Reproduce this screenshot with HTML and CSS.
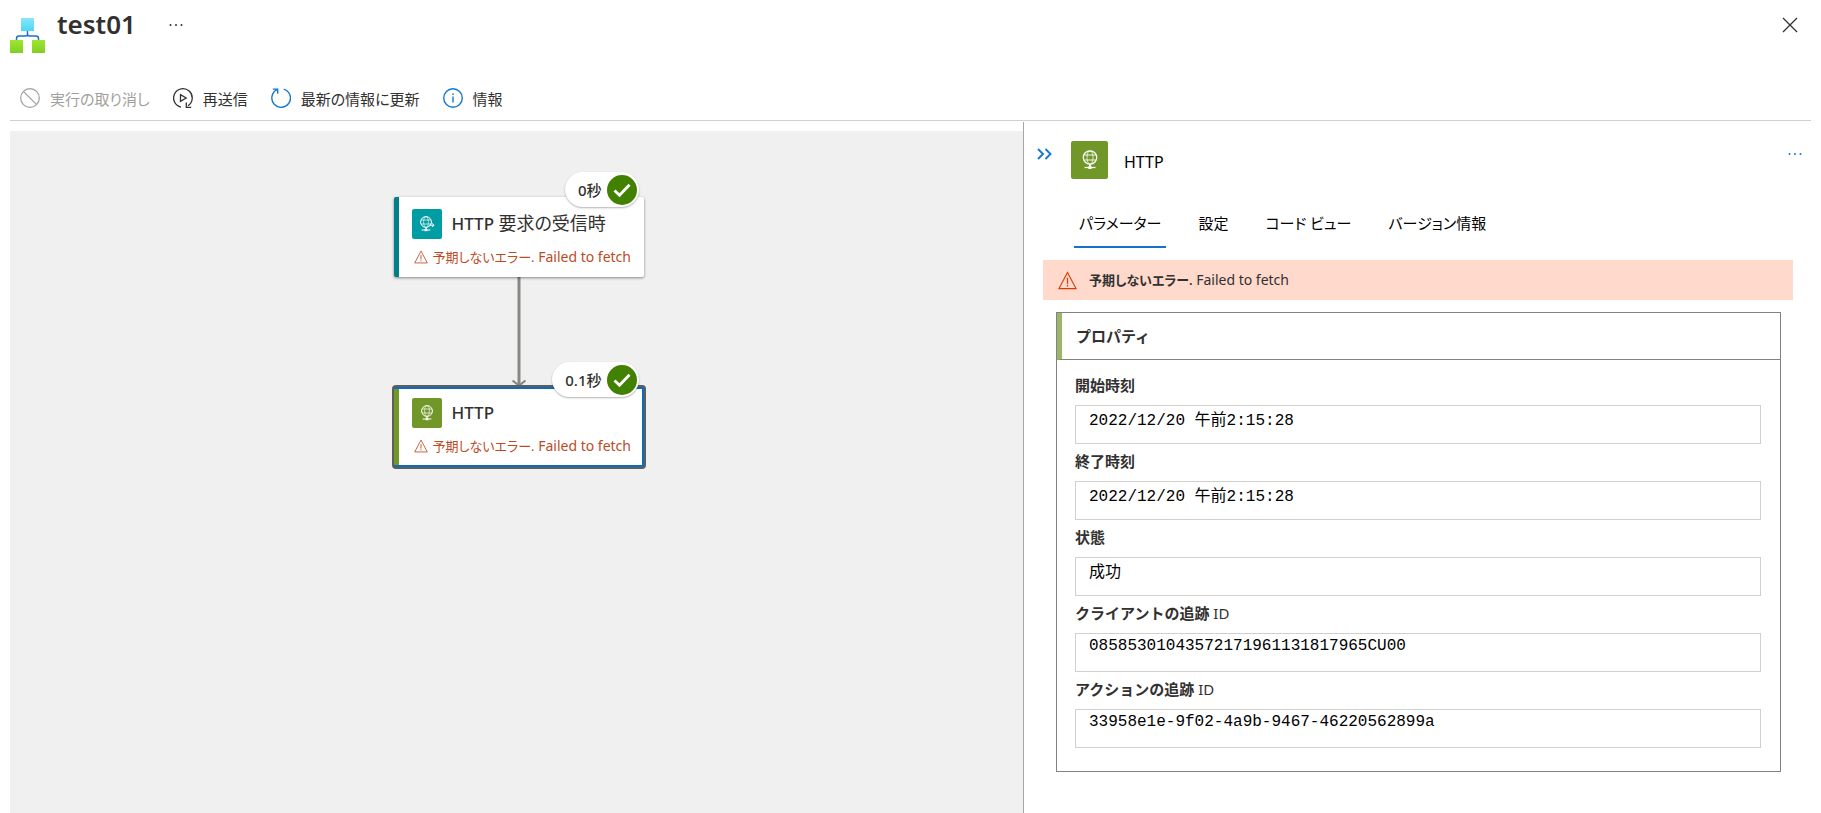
FILE: index.html
```html
<!DOCTYPE html>
<html lang="ja">
<head>
<meta charset="utf-8">
<meta name="viewport" content="width=device-width, initial-scale=1">
<title>test01</title>
<link rel="stylesheet" href="styles.css">
</head>
<body>
<svg class="defs" aria-hidden="true">
  <symbol id="globe" viewBox="0 0 14 16">
    <g fill="none" stroke="currentColor">
      <circle cx="7" cy="6" r="5.4" stroke-width="1"/>
      <ellipse cx="7" cy="6" rx="2.4" ry="5.4" stroke-width=".6"/>
      <path d="M2.2 4h9.600M2.200 8h9.600" stroke-width=".7"/>
      <path d="M7 11.500v2" stroke-width="1.400"/>
      <path d="M2.600 14h8.800" stroke-width="1"/>
      <path d="M5.600 14.200h2.800" stroke-width="2"/>
    </g>
  </symbol>
  <symbol id="warning" viewBox="0 0 20 20">
    <path d="M10 1.5 19 18.500H1Z" fill="none" stroke="currentColor" stroke-width="1.2"/>
    <path d="M10 7.200v6.300M10 14.600v1.600" stroke="currentColor" stroke-width="1.3"/>
  </symbol>
  <symbol id="done" viewBox="0 0 30 30">
    <circle cx="15" cy="15" r="15" fill="#428000"/>
    <path d="M7.500 15.500 12.500 20.300 22.500 9.800" fill="none" stroke="#fff" stroke-width="2.800"/>
  </symbol>
  <symbol id="more" viewBox="0 0 14 4">
    <g fill="currentColor"><circle cx="1.500" cy="2" r="1"/><circle cx="7" cy="2" r="1"/><circle cx="12.500" cy="2" r="1"/></g>
  </symbol>
</svg>

<header class="header">
  <svg class="app-logo" viewBox="0 0 35 35" aria-hidden="true">
    <defs>
      <linearGradient id="sky" x2="0" y2="1"><stop stop-color="#86e7fb"/><stop offset="1" stop-color="#50d5f5"/></linearGradient>
      <linearGradient id="lime" x2="0" y2="1"><stop stop-color="#a0e52f"/><stop offset="1" stop-color="#80cf25"/></linearGradient>
    </defs>
    <path d="M17.500 13v3q0 2-2 2H9q-2.500 0-2.500 2.500V23M17.500 13v3q0 2 2 2H26q2.500 0 2.500 2.500V23" fill="none" stroke="#1b72c9" stroke-width="1.500"/>
    <path d="M11 0h13v13H11z" fill="url(#sky)"/>
    <path d="M0 22h13v13H0zM22 22h13v13H22z" fill="url(#lime)"/>
  </svg>
  <h1 class="title">test01</h1>
  <button class="icon-button" type="button" aria-label="その他"><svg class="more" aria-hidden="true"><use href="#more"/></svg></button>
  <button class="icon-button close" type="button" aria-label="閉じる"><svg class="close-icon" viewBox="0 0 16 16" aria-hidden="true"><path d="M1 1 15 15M15 1 1 15" stroke="currentColor" stroke-width="1.300"/></svg></button>
</header>

<nav class="toolbar">
  <button class="command" type="button" disabled>
    <svg class="command-icon" viewBox="0 0 20 20" aria-hidden="true"><g fill="none" stroke="#a19f9d" stroke-width="1.200"><circle cx="10" cy="10" r="9.300"/><path d="M3.400 3.400 16.600 16.600"/></g></svg>
    実行の取り消し
  </button>
  <button class="command" type="button">
    <svg class="command-icon" viewBox="0 0 20 20" aria-hidden="true"><g fill="none" stroke="#323130" stroke-width="1.300"><path d="M8 19.100A9.300 9.300 0 1 1 15 17.800M13.300 14.500v4.800h4.900"/><path d="M7.500 6.600v6.800l5.700-3.400z"/></g></svg>
    再送信
  </button>
  <button class="command" type="button">
    <svg class="command-icon" viewBox="0 0 20 20" aria-hidden="true"><g fill="none" stroke="#1478d2" stroke-width="1.400"><path d="M12.700 1.100A9.300 9.300 0 1 1 6 1.700M1.800 1.100h4.900v4.700"/></g></svg>
    最新の情報に更新
  </button>
  <button class="command" type="button">
    <svg class="command-icon" viewBox="0 0 20 20" aria-hidden="true"><circle cx="10" cy="10" r="9.300" fill="none" stroke="#1478d2" stroke-width="1.400"/><path d="M10 8.500v6M10 5.300v1.600" stroke="#1478d2" stroke-width="1.400"/></svg>
    情報
  </button>
</nav>

<main class="workspace">
  <section class="canvas">
    <article class="node node-trigger">
      <div class="badge">0秒<svg class="badge-icon" aria-hidden="true"><use href="#done"/></svg></div>
      <div class="node-head">
        <span class="tile tile-teal"><svg class="tile-glyph" viewBox="0 0 16 16" aria-hidden="true"><use href="#globe" width="14" height="16"/><path d="M10.500 9.200h4.500M13 7.200l2 2-2 2" fill="none" stroke="currentColor" stroke-width="1"/></svg></span>
        <h2 class="node-title">HTTP <span class="light">要求の受信時</span></h2>
      </div>
      <p class="node-error"><svg class="node-warning" aria-hidden="true"><use href="#warning"/></svg><span><span class="compact">予期しないエラー.</span> Failed to fetch</span></p>
    </article>
    <svg class="connector" viewBox="0 0 16 110" aria-hidden="true"><g fill="none" stroke="#8a8886"><path d="M8 0v109" stroke-width="3"/><path d="M1.500 103.500 8 108.500 14.500 103.500" stroke-width="2.200"/></g></svg>
    <article class="node node-selected">
      <div class="badge">0.1秒<svg class="badge-icon" aria-hidden="true"><use href="#done"/></svg></div>
      <div class="node-head">
        <span class="tile tile-green"><svg class="tile-glyph" viewBox="0 0 16 16" aria-hidden="true"><use href="#globe" x="1" width="14" height="16"/></svg></span>
        <h2 class="node-title">HTTP</h2>
      </div>
      <p class="node-error"><svg class="node-warning" aria-hidden="true"><use href="#warning"/></svg><span><span class="compact">予期しないエラー.</span> Failed to fetch</span></p>
    </article>
  </section>

  <aside class="panel">
    <div class="panel-head">
      <button class="icon-button collapse" type="button" aria-label="折りたたむ"><svg class="chevrons" viewBox="0 0 15 12" aria-hidden="true"><path d="M1 1l5 5-5 5M8.500 1l5 5-5 5" fill="none" stroke="currentColor" stroke-width="1.900"/></svg></button>
      <span class="tile tile-green tile-large"><svg class="tile-glyph-large" aria-hidden="true"><use href="#globe"/></svg></span>
      <h2 class="panel-title">HTTP</h2>
      <button class="icon-button panel-more" type="button" aria-label="その他"><svg class="more" aria-hidden="true"><use href="#more"/></svg></button>
    </div>
    <div class="tabs" role="tablist">
      <button class="tab" type="button" role="tab" aria-selected="true">パラメーター</button>
      <button class="tab" type="button" role="tab" aria-selected="false">設定</button>
      <button class="tab" type="button" role="tab" aria-selected="false">コード ビュー</button>
      <button class="tab" type="button" role="tab" aria-selected="false">バージョン情報</button>
    </div>
    <div class="alert" role="alert"><svg class="alert-icon" aria-hidden="true"><use href="#warning"/></svg><p class="alert-text"><strong class="compact">予期しないエラー.</strong> Failed to fetch</p></div>
    <section class="card">
      <h3 class="card-title">プロパティ</h3>
      <div class="fields">
        <label class="label" for="start">開始時刻</label>
        <input class="value" id="start" readonly value="2022/12/20 午前2:15:28">
        <label class="label" for="end">終了時刻</label>
        <input class="value" id="end" readonly value="2022/12/20 午前2:15:28">
        <label class="label" for="status">状態</label>
        <input class="value" id="status" readonly value="成功">
        <label class="label" for="client">クライアントの追跡 <span class="latin">ID</span></label>
        <input class="value" id="client" readonly value="08585301043572171961131817965CU00">
        <label class="label" for="action">アクションの追跡 <span class="latin">ID</span></label>
        <input class="value" id="action" readonly value="33958e1e-9f02-4a9b-9467-46220562899a">
      </div>
    </section>
  </aside>
</main>
</body>
</html>
```
FILE: styles.css
```css
* { box-sizing: border-box; }

body {
  margin: 0;
  min-height: 100vh;
  display: flex;
  flex-direction: column;
  background: #fff;
  color: #323130;
  font-family: "Noto Sans", "Noto Sans CJK JP", sans-serif;
  font-size: 15px;
  font-feature-settings: "palt";
}

h1, h2, h3, p { margin: 0; }
button { font: inherit; font-feature-settings: inherit; color: inherit; background: none; border: 0; padding: 0; cursor: pointer; }
svg { display: block; flex: none; }
.defs { position: absolute; width: 0; height: 0; }

.header { display: flex; align-items: flex-start; padding: 6px 23px 0 10px; height: 78px; }
.app-logo { width: 35px; height: 35px; margin: 12px 12px 0 0; }
.title { font-size: 26px; line-height: 36px; font-weight: 600; }
.icon-button { display: flex; align-items: center; height: 38px; }
.header .icon-button { margin-left: 33px; }
.more { width: 14px; height: 4px; }
.header .close { margin-left: auto; }
.close-icon { width: 16px; height: 16px; }

.toolbar { display: flex; gap: 23px; margin: 0 10px; padding: 0 10px; height: 43px; border-bottom: 1px solid #d2d0ce; }
.command { display: flex; align-items: center; gap: 10px; height: 40px; white-space: nowrap; }
.command:disabled { color: #a19f9d; }
.command-icon { width: 20px; height: 20px; }
.compact { font-size: 13px; }

.workspace { flex: 1; display: grid; grid-template-columns: 1013fr 798fr; padding: 1px 0 0 10px; }

.canvas { display: flex; flex-direction: column; align-items: center; margin-top: 9px; padding: 66px 0 0 4px; background: #f0f0f0; }
.node { position: relative; width: 250px; height: 80px; padding: 11px 0 0 13px; background: #fff; border-left: 5px solid #007f88; border-radius: 2px; box-shadow: 0 1px 3px rgba(0, 0, 0, .45); }
.node-selected { border-color: #709727; box-shadow: 0 0 0 2px #605e5c; }
.node-selected::after { content: ""; position: absolute; inset: 0 0 0 -5px; border: solid #0f6cbd; border-width: 2px 2px 2px 0; pointer-events: none; }
.node-head { display: flex; align-items: center; gap: 10px; }
.tile { display: flex; align-items: center; justify-content: center; width: 30px; height: 30px; border-radius: 2px; color: #fff; }
.tile-teal { background: #009da5; }
.tile-green { background: #709727; }
.tile-glyph { width: 16px; height: 16px; }
.node-title { font-size: 17px; line-height: 30px; font-weight: 500; white-space: nowrap; }
.light { font-size: 18px; font-weight: 400; }
.node-error { display: flex; align-items: center; gap: 5px; margin: 8px 0 0 2px; font-size: 14px; line-height: 20px; color: #bc4b24; white-space: nowrap; }
.node-warning { width: 14px; height: 14px; }
.badge { position: absolute; z-index: 1; right: 5px; top: -25px; display: flex; align-items: center; gap: 5px; height: 35px; padding: 0 2px 0 13px; border-radius: 18px; background: #fff; box-shadow: 0 1px 2px rgba(0, 0, 0, .3); font-size: 15px; font-weight: 500; }
.badge-icon { width: 30px; height: 30px; }
.connector { width: 16px; height: 110px; }

.panel { border-left: 1px solid #a6a6a6; }
.panel-head { display: flex; align-items: center; padding: 19px 19px 0 13px; color: #000; }
.collapse, .panel-more { color: #1478d2; align-self: flex-start; height: 26px; }
.chevrons { width: 15px; height: 12px; }
.tile-large { width: 37px; height: 38px; margin: 0 16px 0 19px; }
.tile-glyph-large { width: 18px; height: 20px; }
.panel-title { padding-top: 4px; font-size: 16px; line-height: 34px; font-weight: 400; }
.panel-more { margin-left: auto; }

.tabs { display: flex; gap: 27px; padding: 26px 0 0 50px; }
.tab { padding: 0 5px; height: 43px; font-size: 15px; line-height: 36px; color: #000; white-space: nowrap; display: flex; align-items: flex-start; }
.tab[aria-selected="true"] { border-bottom: 2px solid #1373c8; }

.alert { display: flex; align-items: center; gap: 12px; margin: 12px 28px 12px 19px; padding: 0 15px; height: 40px; background: #fed9cc; }
.alert-icon { width: 19px; height: 19px; color: #d83b01; }
.alert-text { font-size: 14px; line-height: 20px; }
.alert-text strong { font-weight: 600; }

.card { margin: 0 40px 41px 32px; border: 1px solid #848280; font-feature-settings: normal; }
.card-title { border-left: 5px solid #9bb56b; border-bottom: 1px solid #848280; padding: 0 14px; font-size: 15px; line-height: 46px; font-weight: 600; }
.fields { display: flex; flex-direction: column; padding: 15px 19px 23px 18px; }
.label { font-size: 15px; line-height: 20px; margin-bottom: 10px; font-weight: 600; }
.latin { font-weight: 400; }
.value { width: 100%; height: 39px; margin-bottom: 7px; padding: 0 13px 13px; border: 1px solid #d2d0ce; border-radius: 0; background: #fff; color: #000; font-family: "Liberation Mono", "Noto Sans CJK JP", monospace; font-size: 16px; line-height: 24px; outline: 0; }
.value:last-child { margin-bottom: 0; }
```
